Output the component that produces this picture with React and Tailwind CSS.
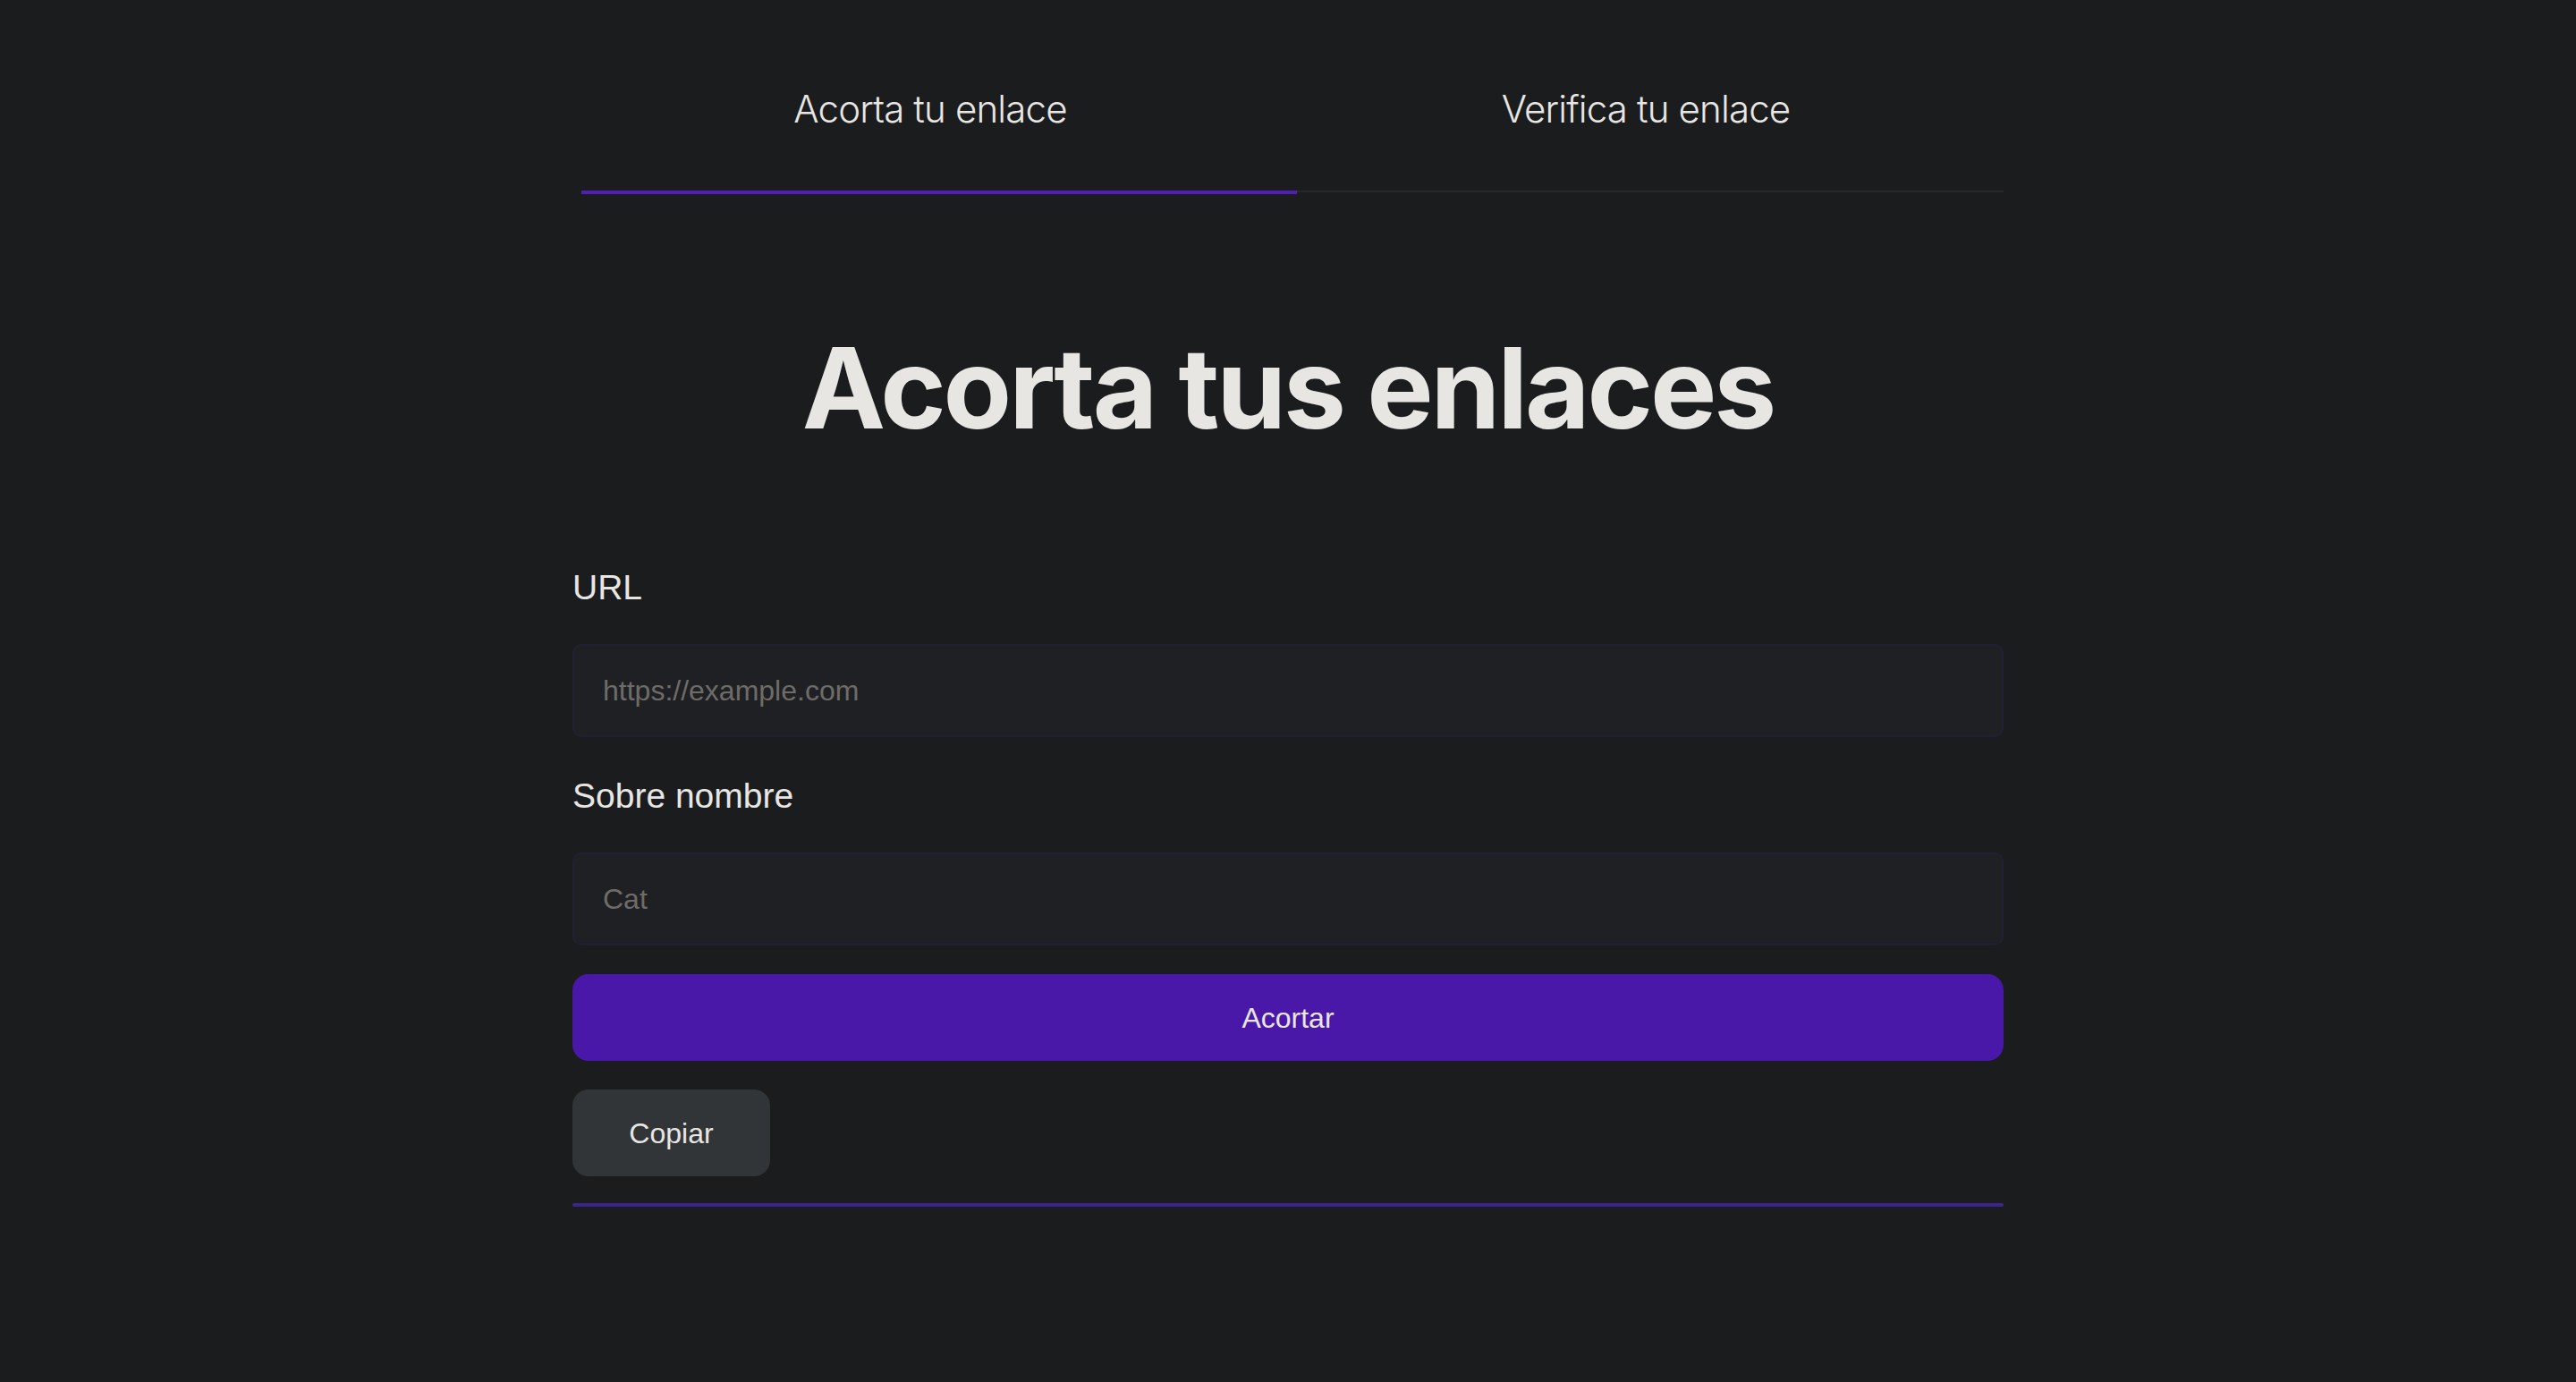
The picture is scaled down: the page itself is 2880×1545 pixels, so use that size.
import React, { useState } from "react";

const tabs = ["Acorta tu enlace", "Verifica tu enlace"];

function Field({ label, placeholder, className }) {
  return (
    <div className={className}>
      <label className="block text-[39px] leading-[40px] text-[#e8e6e3] font-['Liberation_Sans',Arial,sans-serif]">
        {label}
      </label>
      <input
        type="text"
        placeholder={placeholder}
        className="mt-[43px] block h-[104px] w-full rounded-[10px] border-2 border-[#231f33] bg-[#1f2023] px-[32px] text-[32px] text-[#e8e6e3] outline-none placeholder:text-[#6e6c68] font-['Liberation_Sans',Arial,sans-serif]"
      />
    </div>
  );
}

export default function App() {
  const [active, setActive] = useState(0);

  return (
    <main className="min-h-screen bg-[#1b1c1e] font-['Inter',sans-serif]">
      <div className="mx-auto w-[1600px]">
        <nav className="flex">
          {tabs.map((t, i) => (
            <button
              key={t}
              onClick={() => setActive(i)}
              className="h-[213px] flex-1 pb-[70px] pt-[101px] text-[42px] font-light leading-[42px] tracking-[-0.02em] text-[#e8e6e3]"
            >
              {t}
            </button>
          ))}
        </nav>
        {/* indicator sits 10px in from the tab row */}
        <div className="ml-[10px] flex h-[4px] items-start">
          <div className={"h-[4px] w-[800px] " + (active === 0 ? "bg-[#4f1fb8]" : "bg-[#26282b]")} />
          <div className={"flex-1 " + (active === 1 ? "h-[4px] bg-[#4f1fb8]" : "h-[2px] bg-[#26282b]")} />
        </div>

        <h1 className="mt-[154px] text-center text-[125px] font-bold leading-[125px] tracking-[-0.025em] text-[#e8e6e3]">
          Acorta tus enlaces
        </h1>

        <form className="mt-[141px]" onSubmit={(e) => e.preventDefault()}>
          <Field label="URL" placeholder="https://example.com" />
          <Field label="Sobre nombre" placeholder="Cat" className="mt-[46px]" />

          <button
            type="submit"
            className="mt-[32px] block h-[97px] w-full rounded-[18px] bg-[#4918a9] text-[32px] text-[#e8e6e3] font-['Liberation_Sans',Arial,sans-serif]"
          >
            Acortar
          </button>
          <button
            type="button"
            className="mt-[32px] block h-[97px] w-[221px] rounded-[18px] bg-[#323538] text-[32px] text-[#e8e6e3] font-['Liberation_Sans',Arial,sans-serif]"
          >
            Copiar
          </button>
          <div className="mt-[30px] h-[4px] w-full rounded-full bg-[#3d2590]" />
        </form>
      </div>
    </main>
  );
}
